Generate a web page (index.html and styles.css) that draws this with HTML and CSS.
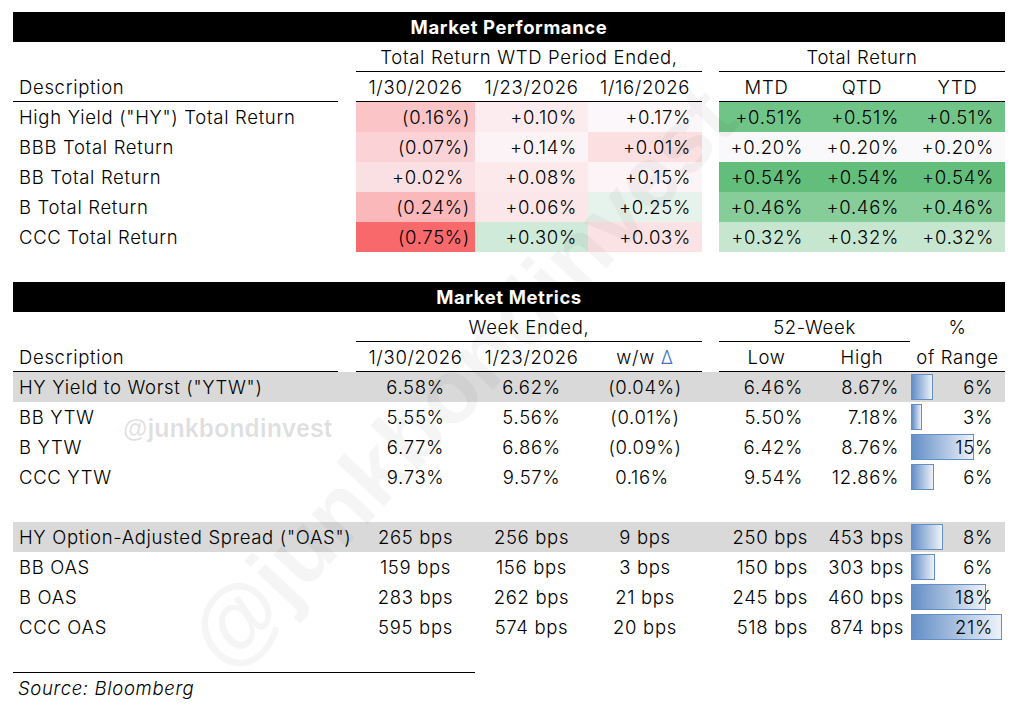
FILE: index.html
```html
<!DOCTYPE html>
<html lang="en">
<head>
<meta charset="utf-8">
<title>Market Performance</title>
<link rel="stylesheet" href="styles.css">
</head>
<body>
<div class="page">
  <div class="sheet">
    <div class="bar-title">Market Performance</div>
    <div class="row">
      <div class="c-desc"></div><div></div>
      <div class="span-wtd hdr ul">Total Return WTD Period Ended,</div>
      <div></div>
      <div class="span-tr hdr ul">Total Return</div>
    </div>
    <div class="row">
      <div class="c-desc ul">Description</div><div></div>
      <div class="hdr ul">1/30/2026</div>
      <div class="hdr ul">1/23/2026</div>
      <div class="hdr ul">1/16/2026</div>
      <div></div>
      <div class="hdr ul">MTD</div>
      <div class="hdr ul">QTD</div>
      <div class="hdr ul">YTD</div>
    </div>
    <div class="row">
      <div class="c-desc">High Yield ("HY") Total Return</div><div></div>
      <div class="v neg" style="background:#FBC4C7">(0.16%)</div>
      <div class="v pos" style="background:#FCECEF">+0.10%</div>
      <div class="v pos" style="background:#FCF7FA">+0.17%</div>
      <div></div>
      <div class="v pos" style="background:#71C487">+0.51%</div>
      <div class="v pos" style="background:#71C487">+0.51%</div>
      <div class="v pos" style="background:#71C487">+0.51%</div>
    </div>
    <div class="row">
      <div class="c-desc">BBB Total Return</div><div></div>
      <div class="v neg" style="background:#FBD2D5">(0.07%)</div>
      <div class="v pos" style="background:#FCF3F6">+0.14%</div>
      <div class="v pos" style="background:#FBDFE1">+0.01%</div>
      <div></div>
      <div class="v pos" style="background:#F9F9FC">+0.20%</div>
      <div class="v pos" style="background:#F9F9FC">+0.20%</div>
      <div class="v pos" style="background:#F9F9FC">+0.20%</div>
    </div>
    <div class="row">
      <div class="c-desc">BB Total Return</div><div></div>
      <div class="v pos" style="background:#FBE0E3">+0.02%</div>
      <div class="v pos" style="background:#FCE9EC">+0.08%</div>
      <div class="v pos" style="background:#FCF4F7">+0.15%</div>
      <div></div>
      <div class="v pos" style="background:#63BE7B">+0.54%</div>
      <div class="v pos" style="background:#63BE7B">+0.54%</div>
      <div class="v pos" style="background:#63BE7B">+0.54%</div>
    </div>
    <div class="row">
      <div class="c-desc">B Total Return</div><div></div>
      <div class="v neg" style="background:#FAB8BB">(0.24%)</div>
      <div class="v pos" style="background:#FBE6E9">+0.06%</div>
      <div class="v pos" style="background:#E6F3EC">+0.25%</div>
      <div></div>
      <div class="v pos" style="background:#87CD9A">+0.46%</div>
      <div class="v pos" style="background:#87CD9A">+0.46%</div>
      <div class="v pos" style="background:#87CD9A">+0.46%</div>
    </div>
    <div class="row">
      <div class="c-desc">CCC Total Return</div><div></div>
      <div class="v neg" style="background:#F8696B">(0.75%)</div>
      <div class="v pos" style="background:#CFEAD8">+0.30%</div>
      <div class="v pos" style="background:#FBE2E5">+0.03%</div>
      <div></div>
      <div class="v pos" style="background:#C6E6D0">+0.32%</div>
      <div class="v pos" style="background:#C6E6D0">+0.32%</div>
      <div class="v pos" style="background:#C6E6D0">+0.32%</div>
    </div>
    <div class="row spacer"></div>

    <div class="bar-title">Market Metrics</div>
    <div class="row">
      <div class="c-desc"></div><div></div>
      <div class="span-wtd hdr ul">Week Ended,</div>
      <div></div>
      <div class="span-52 hdr ul">52-Week</div>
      <div class="hdr">%</div>
    </div>
    <div class="row">
      <div class="c-desc ul">Description</div><div></div>
      <div class="hdr ul">1/30/2026</div>
      <div class="hdr ul">1/23/2026</div>
      <div class="hdr ul">w/w <span class="delta">Δ</span></div>
      <div></div>
      <div class="hdr ul">Low</div>
      <div class="hdr ul">High</div>
      <div class="hdr ul">of Range</div>
    </div>
    <div class="row shaded">
      <div class="c-desc">HY Yield to Worst ("YTW")</div><div></div>
      <div class="m">6.58%</div>
      <div class="m">6.62%</div>
      <div class="m">(0.04%)</div>
      <div></div>
      <div class="r pct">6.46%</div>
      <div class="r pct">8.67%</div>
      <div class="rng"><span class="databar" style="width:22px"></span><span class="rng-val">6%</span></div>
    </div>
    <div class="row">
      <div class="c-desc">BB YTW</div><div></div>
      <div class="m">5.55%</div>
      <div class="m">5.56%</div>
      <div class="m">(0.01%)</div>
      <div></div>
      <div class="r pct">5.50%</div>
      <div class="r pct">7.18%</div>
      <div class="rng"><span class="databar" style="width:11px"></span><span class="rng-val">3%</span></div>
    </div>
    <div class="row">
      <div class="c-desc">B YTW</div><div></div>
      <div class="m">6.77%</div>
      <div class="m">6.86%</div>
      <div class="m">(0.09%)</div>
      <div></div>
      <div class="r pct">6.42%</div>
      <div class="r pct">8.76%</div>
      <div class="rng"><span class="databar" style="width:63px"></span><span class="rng-val">15%</span></div>
    </div>
    <div class="row">
      <div class="c-desc">CCC YTW</div><div></div>
      <div class="m">9.73%</div>
      <div class="m">9.57%</div>
      <div class="m pos-m">0.16%</div>
      <div></div>
      <div class="r pct">9.54%</div>
      <div class="r pct">12.86%</div>
      <div class="rng"><span class="databar" style="width:23px"></span><span class="rng-val">6%</span></div>
    </div>
    <div class="row spacer"></div>
    <div class="row shaded">
      <div class="c-desc">HY Option-Adjusted Spread ("OAS")</div><div></div>
      <div class="m">265 bps</div>
      <div class="m">256 bps</div>
      <div class="m">9 bps</div>
      <div></div>
      <div class="r bps">250 bps</div>
      <div class="r bps">453 bps</div>
      <div class="rng"><span class="databar" style="width:32px"></span><span class="rng-val">8%</span></div>
    </div>
    <div class="row">
      <div class="c-desc">BB OAS</div><div></div>
      <div class="m">159 bps</div>
      <div class="m">156 bps</div>
      <div class="m">3 bps</div>
      <div></div>
      <div class="r bps">150 bps</div>
      <div class="r bps">303 bps</div>
      <div class="rng"><span class="databar" style="width:24px"></span><span class="rng-val">6%</span></div>
    </div>
    <div class="row">
      <div class="c-desc">B OAS</div><div></div>
      <div class="m">283 bps</div>
      <div class="m">262 bps</div>
      <div class="m">21 bps</div>
      <div></div>
      <div class="r bps">245 bps</div>
      <div class="r bps">460 bps</div>
      <div class="rng"><span class="databar" style="width:75px"></span><span class="rng-val">18%</span></div>
    </div>
    <div class="row">
      <div class="c-desc">CCC OAS</div><div></div>
      <div class="m">595 bps</div>
      <div class="m">574 bps</div>
      <div class="m">20 bps</div>
      <div></div>
      <div class="r bps">518 bps</div>
      <div class="r bps">874 bps</div>
      <div class="rng"><span class="databar" style="width:91px"></span><span class="rng-val">21%</span></div>
    </div>
    <div class="row spacer"></div>
    <div class="row">
      <div class="source">Source: Bloomberg</div>
    </div>
  </div>
  <div class="wm-small">@junkbondinvest</div>
  <div class="wm-big">@junkbondinvest</div>
</div>
</body>
</html>
```

FILE: styles.css
```css
* { box-sizing: border-box; }

html, body {
  margin: 0;
  padding: 0;
  background: #ffffff;
}

body {
  font-family: "Inter", "Liberation Sans", sans-serif;
  font-size: 18.5px;
  font-weight: 300;
  letter-spacing: 0.68px;
  color: #000;
}

.page {
  position: relative;
  width: 1027px;
  height: 705px;
  padding: 12px 0 0 13px;
  overflow: hidden;
}

.sheet {
  width: 992px;
  display: flex;
  flex-direction: column;
}

.bar-title {
  height: 30px;
  background: #000;
  color: #fff;
  font-weight: 700;
  font-size: 18.5px;
  letter-spacing: 0.6px;
  text-align: center;
  line-height: 30px;
}

.row {
  display: grid;
  grid-template-columns: 325px 18px 119px 113px 114px 17px 95px 96px 95px;
  height: 30px;
}

.row > div {
  height: 30px;
  padding-top: 1px;
  line-height: 29px;
  white-space: nowrap;
}

.spacer { height: 30px; }

.shaded { background: #d9d9d9; }

.c-desc { padding-left: 6px; }

.span-wtd { grid-column: 3 / 6; }
.span-tr { grid-column: 7 / 10; }
.span-52 { grid-column: 7 / 9; }

.hdr { text-align: center; }

.ul { border-bottom: 1px solid #000; }

.delta { color: #4472c4; }

.v { text-align: right; }
.v.neg { padding-right: 5px; }
.v.pos { padding-right: 11px; }

.m { text-align: center; }
.m.pos-m { padding-right: 6px; }

.r { text-align: right; }
.r.pct { padding-right: 11px; }
.r.bps { padding-right: 6px; }

.rng {
  position: relative;
  text-align: right;
  padding-right: 12px;
}

.databar {
  position: absolute;
  left: 1px;
  top: 2px;
  bottom: 2px;
  border: 1px solid #638ec6;
  background: linear-gradient(to right, #638ec6, #eef2f9);
}

.rng-val { position: relative; }

.row > .source {
  grid-column: 1 / 4;
  border-top: 1px solid #000;
  padding-left: 5px;
  font-style: italic;
}

.wm-small {
  position: absolute;
  left: 123px;
  top: 414px;
  font-family: "Liberation Sans", sans-serif;
  font-weight: 700;
  font-size: 25px;
  letter-spacing: 0;
  color: rgba(0, 0, 0, 0.12);
  pointer-events: none;
}

.wm-big {
  position: absolute;
  left: 462px;
  top: 378px;
  transform: translate(-50%, -50%) rotate(-47deg);
  font-family: "Liberation Sans", sans-serif;
  font-weight: 700;
  font-size: 90px;
  letter-spacing: 0;
  color: rgba(0, 0, 0, 0.04);
  white-space: nowrap;
  pointer-events: none;
}
```
